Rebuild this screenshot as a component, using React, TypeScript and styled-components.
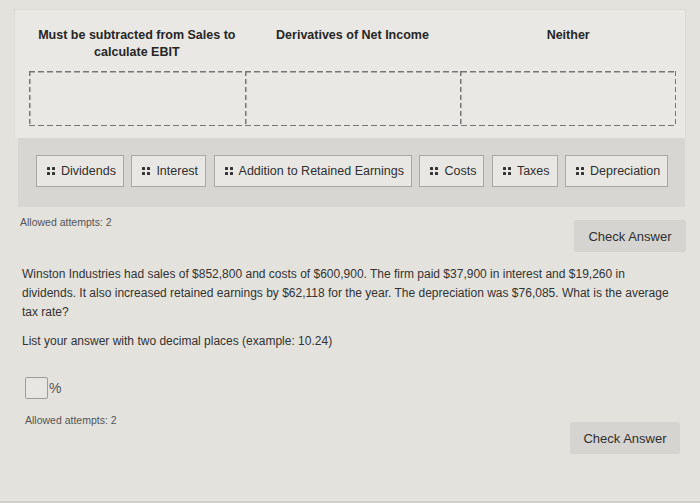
import styled, { createGlobalStyle } from 'styled-components';

const GlobalStyle = createGlobalStyle`
	html, body {
		margin: 0;
		padding: 0;
		background: #e4e2dd;
	}
	body {
		font-family: 'Liberation Sans', Arial, sans-serif;
		color: #2f2f2f;
	}
`;

const columns = ['Must be subtracted from Sales to calculate EBIT', 'Derivatives of Net Income', 'Neither'];
const items = ['Dividends', 'Interest', 'Addition to Retained Earnings', 'Costs', 'Taxes', 'Depreciation'];

function Grip() {
	return (
		<svg width='8' height='8' viewBox='0 0 8 8'>
			<rect x='0' y='0' width='3' height='3' rx='0.6' fill='#333' />
			<rect x='5' y='0' width='3' height='3' rx='0.6' fill='#333' />
			<rect x='0' y='5' width='3' height='3' rx='0.6' fill='#333' />
			<rect x='5' y='5' width='3' height='3' rx='0.6' fill='#333' />
		</svg>
	);
}

export default function App() {
	return (
		<Page>
			<GlobalStyle />
			<Board>
				<Headers>
					{columns.map((c) => (
						<ColumnTitle key={c}>{c}</ColumnTitle>
					))}
				</Headers>
				<DropRow>
					{columns.map((c) => (
						<DropZone key={c} />
					))}
				</DropRow>
			</Board>
			<Bank>
				{items.map((item) => (
					<Chip key={item}>
						<Grip />
						{item}
					</Chip>
				))}
			</Bank>
			<ActionRow>
				<Attempts>Allowed attempts: 2</Attempts>
				<CheckButton>Check Answer</CheckButton>
			</ActionRow>
			<Question>
				<p>
					Winston Industries had sales of $852,800 and costs of $600,900. The firm paid $37,900 in interest and $19,260 in
					dividends. It also increased retained earnings by $62,118 for the year. The depreciation was $76,085. What is the
					average tax rate?
				</p>
				<p>List your answer with two decimal places (example: 10.24)</p>
				<AnswerLine>
					<AnswerBox />
					<span>%</span>
				</AnswerLine>
				<ActionRow $bottom>
					<Attempts>Allowed attempts: 2</Attempts>
					<CheckButton $bottom>Check Answer</CheckButton>
				</ActionRow>
			</Question>
		</Page>
	);
}

const dash = '#767676';

const Page = styled.div`
	width: 700px;
	height: 503px;
	box-sizing: border-box;
	padding: 9px 14px 0 14px;
	overflow: hidden;
	border-bottom: 2px solid #d2d0cb;
`;

const Board = styled.div`
	background: #e9e8e4;
	border: 1px solid #dcdad5;
	border-bottom: none;
	padding: 17px 9px 12px 14px;
`;

const Headers = styled.div`
	display: grid;
	grid-template-columns: repeat(3, 1fr);
`;

const ColumnTitle = styled.div`
	font-size: 12.5px;
	font-weight: bold;
	line-height: 17px;
	text-align: center;
	color: #262626;
	padding: 0 8px;
`;

const DropRow = styled.div`
	display: grid;
	grid-template-columns: repeat(3, 1fr);
	margin-top: 10px;
	height: 55px;
	background-image:
		repeating-linear-gradient(90deg, ${dash} 0 6px, transparent 6px 9px),
		repeating-linear-gradient(90deg, ${dash} 0 6px, transparent 6px 9px),
		repeating-linear-gradient(180deg, ${dash} 0 5px, transparent 5px 8px),
		repeating-linear-gradient(180deg, ${dash} 0 5px, transparent 5px 8px);
	background-size: 100% 1.5px, 100% 1.5px, 1.5px 100%, 1.5px 100%;
	background-position: top left, bottom left, top left, top right;
	background-repeat: no-repeat;
`;

const DropZone = styled.div`
	& + & {
		background-image: repeating-linear-gradient(180deg, ${dash} 0 5px, transparent 5px 8px);
		background-size: 1.5px 100%;
		background-repeat: no-repeat;
	}
`;

const Bank = styled.div`
	margin: 0 1px 0 4px;
	background: #d7d6d2;
	padding: 17px 0 20px 18px;
	display: flex;
	gap: 7.5px;
`;

const Chip = styled.div`
	display: flex;
	align-items: center;
	gap: 6px;
	height: 32px;
	box-sizing: border-box;
	padding: 0 7px 0 10px;
	border: 1px solid #a9a8a5;
	background: #e8e7e3;
	font-size: 12.5px;
	color: #2f2f2f;
	white-space: nowrap;
`;

const ActionRow = styled.div<{ $bottom?: boolean }>`
	display: flex;
	justify-content: space-between;
	align-items: flex-start;
	padding: ${({ $bottom }) => ($bottom ? '0 0 0 3px' : '8px 0 0 6px')};
	margin-top: ${({ $bottom }) => ($bottom ? '11px' : '0')};
`;

const Attempts = styled.div`
	font-size: 10.5px;
	color: #555;
	margin-top: 1px;
`;

const CheckButton = styled.button<{ $bottom?: boolean }>`
	font-family: inherit;
	font-size: 13px;
	color: #2f2f2f;
	background: #d6d4d0;
	border: none;
	border-radius: 2px;
	width: ${({ $bottom }) => ($bottom ? '110px' : '112px')};
	height: 32px;
	margin-top: ${({ $bottom }) => ($bottom ? '12px' : '5px')};
	padding: 0;
`;

const Question = styled.div`
	padding: 13px 6px 0 8px;
	font-size: 12px;
	line-height: 19px;
	color: #333;

	p {
		margin: 0 0 10px 0;
	}
`;

const AnswerLine = styled.div`
	display: flex;
	align-items: center;
	gap: 1px;
	margin-top: 26px;
	padding-left: 3px;
	font-size: 14px;
	color: #555;
`;

const AnswerBox = styled.div`
	width: 21px;
	height: 20px;
	border: 1px solid #9d9c99;
	border-radius: 2px;
	background: #e7e6e2;
`;
